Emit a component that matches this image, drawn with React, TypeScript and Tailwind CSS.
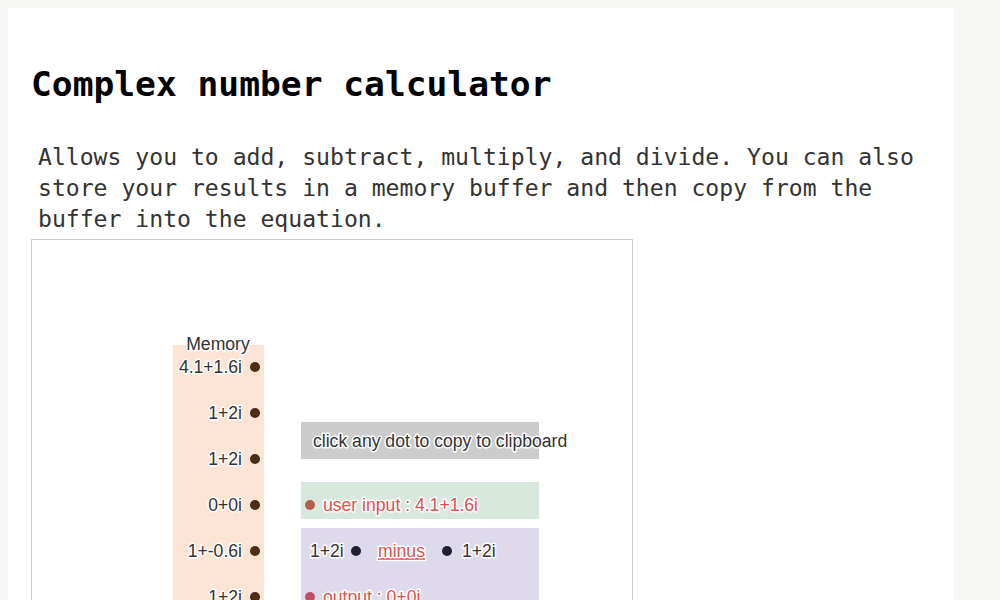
const memory = ['4.1+1.6i', '1+2i', '1+2i', '0+0i', '1+-0.6i', '1+2i']

const halo = {
  stroke: 'white',
  strokeWidth: 3,
  paintOrder: 'stroke',
  strokeLinejoin: 'round',
} as const

function Diagram() {
  return (
    <svg width="600" height="360" className="block font-['Liberation_Sans',Arial,sans-serif] text-[17.6px]">
      <rect x="141" y="105" width="91" height="300" fill="#fde4d4" />
      <text x="186" y="110" textAnchor="middle" fill="#333" {...halo}>
        Memory
      </text>
      {memory.map((m, i) => (
        <g key={i}>
          <text x="210" y={133 + i * 46} textAnchor="end" fill="#333" {...halo}>
            {m}
          </text>
          <circle cx="223" cy={127 + i * 46} r="5" fill="#4b2c18" />
        </g>
      ))}

      <rect x="269" y="182" width="238" height="37" fill="#cccccc" />
      <text x="281" y="207" fill="#333" {...halo}>
        click any dot to copy to clipboard
      </text>

      <rect x="269" y="242" width="238" height="37" fill="#d9e8dc" />
      <circle cx="278" cy="265" r="5" fill="#b5604f" />
      <text x="291" y="271" fill="#d9534f" {...halo}>
        user input : 4.1+1.6i
      </text>

      <rect x="269" y="288" width="238" height="120" fill="#dedaeb" />
      <text x="278" y="317" fill="#333" {...halo}>
        1+2i
      </text>
      <circle cx="324" cy="311" r="5" fill="#221e35" />
      <text x="346" y="317" fill="#d9534f" textDecoration="underline" {...halo}>
        minus
      </text>
      <circle cx="415" cy="311" r="5" fill="#221e35" />
      <text x="430" y="317" fill="#333" {...halo}>
        1+2i
      </text>
      <circle cx="278" cy="357" r="5" fill="#c0506a" />
      <text x="291" y="363" fill="#d9534f" {...halo}>
        output : 0+0i
      </text>
    </svg>
  )
}

export default function App() {
  return (
    <div className="min-h-[600px] bg-[#f6f6f4] pl-2 pt-2 pr-[46px]">
      <main className="min-h-[592px] bg-white pl-[23px] pt-[56px]">
        <h1 className="font-['DejaVu_Sans_Mono',monospace] text-[34.6px] font-bold leading-[40px] text-black">
          Complex number calculator
        </h1>
        <p className="ml-[7px] mt-[38px] max-w-[900px] font-['DejaVu_Sans_Mono',monospace] text-[23.1px] leading-[31px] text-[#333]">
          Allows you to add, subtract, multiply, and divide. You can also store your results in a memory buffer
          and then copy from the buffer into the equation.
        </p>
        <div className="mt-[4px] w-[602px] overflow-hidden border border-[#cccccc]">
          <Diagram />
        </div>
      </main>
    </div>
  )
}
